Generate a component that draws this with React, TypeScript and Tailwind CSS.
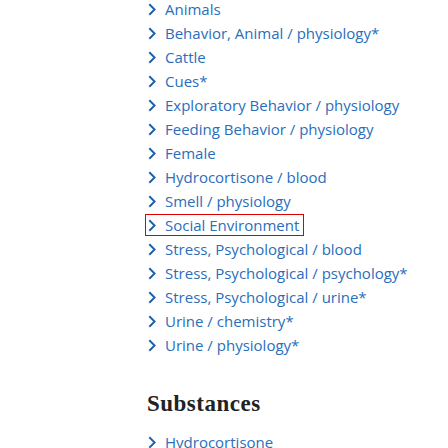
import React from "react";

const terms = [
  "Animals",
  "Behavior, Animal / physiology*",
  "Cattle",
  "Cues*",
  "Exploratory Behavior / physiology",
  "Feeding Behavior / physiology",
  "Female",
  "Hydrocortisone / blood",
  "Smell / physiology",
  "Social Environment",
  "Stress, Psychological / blood",
  "Stress, Psychological / psychology*",
  "Stress, Psychological / urine*",
  "Urine / chemistry*",
  "Urine / physiology*",
];

function Chevron() {
  return (
    <svg width="8" height="13" viewBox="0 0 8 13" className="shrink-0">
      <path d="M1.3 1.3 L6.6 6.5 L1.3 11.7" fill="none" stroke="#1f5fa8" strokeWidth="1.9" />
    </svg>
  );
}

function TermRow({ label, focused }: { label: string; focused?: boolean }) {
  return (
    <li className="h-6 flex items-center">
      <a
        className={
          "inline-flex items-center gap-[9px] pl-[2px] pr-[4px] h-5 text-[#2a6ebb] " +
          (focused ? "outline outline-1 outline-[#e00000]" : "")
        }
      >
        <Chevron />
        <span>{label}</span>
      </a>
    </li>
  );
}

export default function App() {
  return (
    <div className="w-[448px] h-[448px] overflow-hidden bg-white pl-[146px]" style={{ fontFamily: "'Open Sans', sans-serif" }}>
      <ul className="text-[15px] mt-[-3px]">
        {terms.map((t) => (
          <TermRow key={t} label={t} focused={t === "Social Environment"} />
        ))}
      </ul>
      <h2
        className="mt-[33px] mb-[12px] pl-[1px] text-[23px] font-bold text-[#222] leading-7 tracking-[0.5px]"
        style={{ fontFamily: "'Liberation Serif', serif" }}
      >
        Substances
      </h2>
      <ul className="text-[15px]">
        <TermRow label="Hydrocortisone" />
      </ul>
    </div>
  );
}
